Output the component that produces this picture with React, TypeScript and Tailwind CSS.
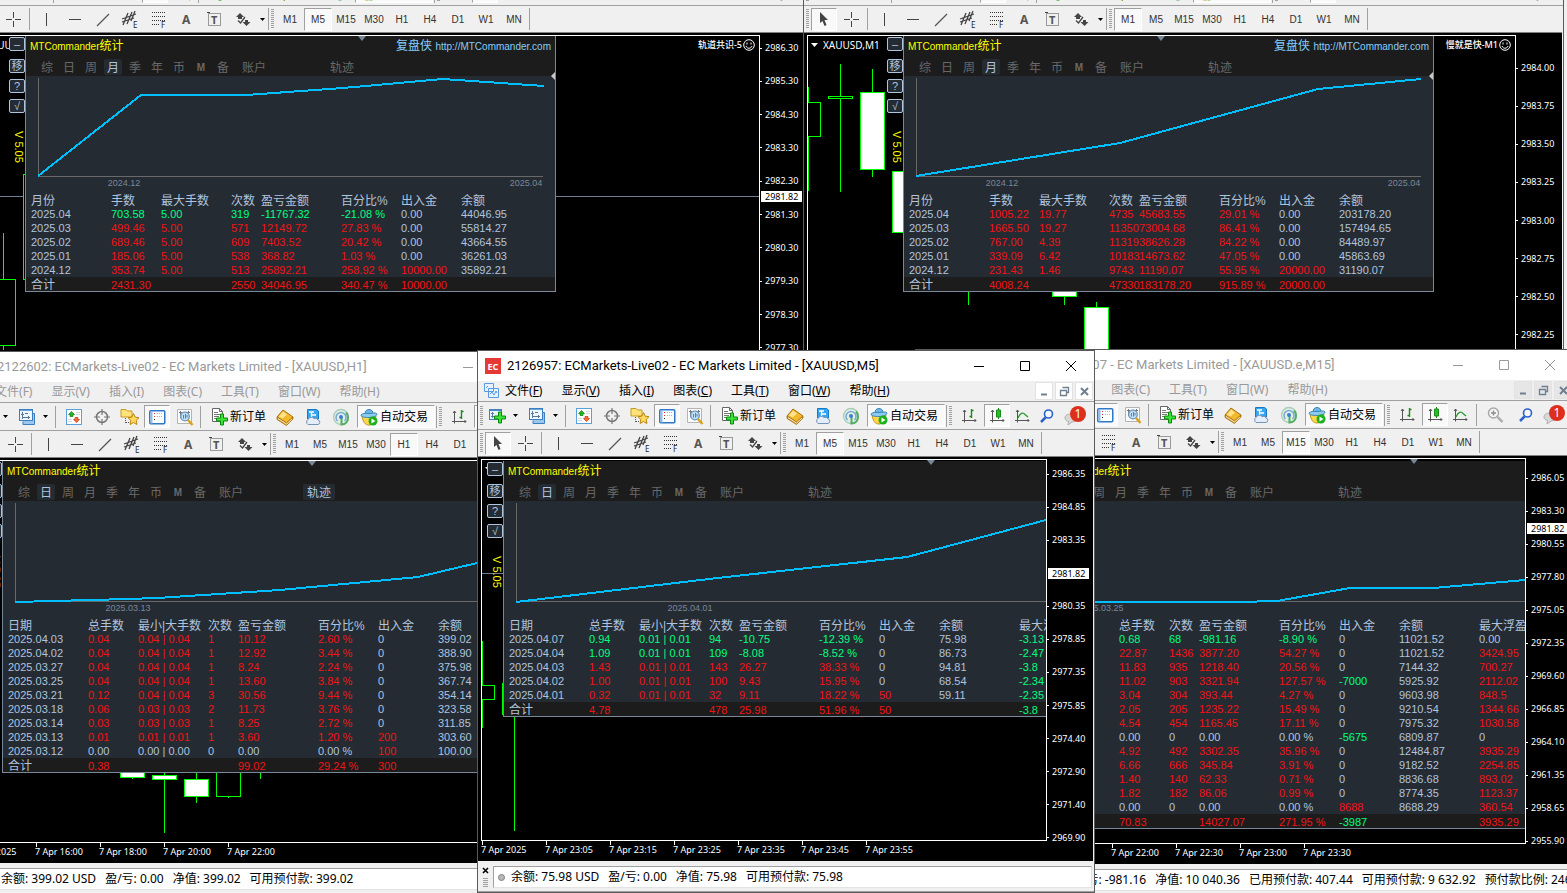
import React from 'react';
import clsx from 'clsx';

type Candle = {
  x: number;
  high: number;
  low: number;
  top?: number;
  bottom?: number;
  filled?: boolean;
};

type Stats = {
  className: string;
  tab: string;
  trackOn?: boolean;
  site?: boolean;
  line: string;
  axisEnd: number;
  dates: { x: number; text: string }[];
  cols: string[];
  head: string[];
  rows: string[][];
  total: string[];
};

type TerminalProps = {
  className: string;
  title: string;
  symbol: string;
  active?: boolean;
  frame: string;
  cursor?: boolean;
  zoomTool?: boolean;
  expert?: string;
  candles: Candle[];
  priceLine?: number;
  marker: string;
  prices: string[];
  priceClass?: string;
  current?: string;
  times: string[];
  status: string[];
  stats: Stats;
};

const frames = ['M1', 'M5', 'M15', 'M30', 'H1', 'H4', 'D1', 'W1', 'MN'];

const menus = [
  ['文件', 'F'],
  ['显示', 'V'],
  ['插入', 'I'],
  ['图表', 'C'],
  ['工具', 'T'],
  ['窗口', 'W'],
  ['帮助', 'H'],
];

const tabs = ['综', '日', '周', '月', '季', '年', '币', 'M', '备'];

const monthCols = [
  'w-[85px]',
  'w-[50px]',
  'w-[70px]',
  'w-[30px]',
  'w-[80px]',
  'w-[60px]',
  'w-[60px]',
  'w-auto',
];
const dayCols = [
  'w-[85px]',
  'w-[50px]',
  'w-[70px]',
  'w-[30px]',
  'w-[80px]',
  'w-[60px]',
  'w-[60px]',
  'w-[80px]',
  'w-auto',
];
const shortCols = [
  'w-[85px]',
  'w-[50px]',
  'w-[30px]',
  'w-[80px]',
  'w-[60px]',
  'w-[60px]',
  'w-[80px]',
  'w-auto',
];

const monthHead = ['月份', '手数', '最大手数', '次数', '盈亏金额', '百分比%', '出入金', '余额'];
const dayHead = ['日期', '总手数', '最小|大手数', '次数', '盈亏金额', '百分比%', '出入金', '余额', '最大浮盈'];

function tone(value: string) {
  const n = parseFloat(value);
  if (!n) return 'text-[#b0c4de]';
  return n < 0 ? 'text-[#00ff7f]' : 'text-[#f01414]';
}

/* ---------- icons ---------- */

function Svg({ w = 18, h = 18, children }: { w?: number; h?: number; children: React.ReactNode }) {
  return (
    <svg width={w} height={h} viewBox={`0 0 ${w} ${h}`} fill="none" className="shrink-0">
      {children}
    </svg>
  );
}

function Plus({ x, y }: { x: number; y: number }) {
  return (
    <path
      d={`M${x + 4} ${y}h3v4h4v3h-4v4h-3v-4h-4v-3h4z`}
      fill="#3be03b"
      stroke="#0a8a0a"
    />
  );
}

const NewChartIcon = () => (
  <Svg>
    <rect x="1.500" y="2.500" width="12" height="10" fill="#eaf4ff" stroke="#4a7fb5" />
    <path d="M2 3.500h11" stroke="#3f8fd0" />
    <path d="M4.500 5v6M3 6.500h3M3 9.500h8" stroke="#5b7fa5" />
    <Plus x={6.5} y={5} />
  </Svg>
);

const ProfilesIcon = () => (
  <Svg>
    <path d="M5 13.500v3h11.500v-11h-2" fill="#9cc6ec" stroke="#3a7fc0" />
    <rect x="1.500" y="1.500" width="13" height="11" fill="#eef6ff" stroke="#3a7fc0" />
    <path d="M2 2.500h12" stroke="#6aa6dc" />
    <path d="M4.500 4v7M3 6.500h3M4 9.500h8M10.500 8v3M7 5.500h3" stroke="#5c7894" />
  </Svg>
);

const MarketIcon = () => (
  <Svg>
    <rect x="1.500" y="1.500" width="15" height="15" fill="#fff" stroke="#5aa0dc" />
    <path d="M6.500 3.500l3 3H8v2H5v-2H3.500z" fill="#22b422" stroke="#128012" strokeWidth=".7" />
    <path d="M11.500 14.500l-3-3H10v-2h3v2h1.500z" fill="#ff6a3c" stroke="#c23a10" strokeWidth=".7" />
    <path d="M11 4.500h4M11 6.500h4M3 11.500h4M3 13.500h4" stroke="#d5dbe1" />
  </Svg>
);

const TargetIcon = () => (
  <Svg>
    <circle cx="9" cy="9" r="5.500" stroke="#777" strokeWidth="1.500" />
    <path d="M9 1v6M9 11v6M1 9h6M11 9h6" stroke="#777" strokeWidth="1.200" />
  </Svg>
);

const FolderIcon = () => (
  <Svg w={20}>
    <path d="M1 1.500h5l1.500 1.500H12v6H1z" fill="#ffe27a" stroke="#c79a1c" />
    <path d="M5.500 10v6M6 14.500h4" stroke="#555" strokeDasharray="1 1" />
    <path
      d="M13.500 5.500l1.700 3.700 3.800.5-2.800 2.700.7 4.100-3.400-2-3.400 2 .7-4.100L8 9.700l3.800-.5z"
      fill="#ffd95c"
      stroke="#b98612"
    />
  </Svg>
);

const TerminalIcon = () => (
  <Svg>
    <rect x="1.750" y="2.750" width="15" height="13" rx="1" fill="#fff" stroke="#2d78c8" strokeWidth="1.500" />
    <path d="M2.500 3.500h2v12h-2z" fill="#8fbdea" />
    <path d="M6 5.500h1M6 8.500h1" stroke="#e03030" />
    <path d="M6 11.500h1" stroke="#222" />
    <path d="M9 5.500h6M9 8.500h6" stroke="#9fb8d0" strokeDasharray="1 1" />
  </Svg>
);

const TesterIcon = () => (
  <Svg>
    <path d="M1.500 1.500h14v14h-14z" fill="#fbfbfb" stroke="#b4b4b4" />
    <path d="M4.500 3v7M3 4.500h3M12.500 3v3M11 4.500h3" stroke="#777" />
    <circle cx="9" cy="8.500" r="4.300" fill="#bfe0f8" stroke="#6b96bd" strokeWidth="1.300" />
    <path d="M7.500 10.500V7M9.500 10.500V6M11 9.500V7" stroke="#5a82a8" />
    <path d="M12 12l4.500 5" stroke="#d9a21b" strokeWidth="2.500" />
  </Svg>
);

const OrderIcon = () => (
  <Svg w={18} h={19}>
    <path d="M2.500 1.500h7l3 3v10h-10z" fill="#fff" stroke="#666" />
    <path d="M9.500 1.500v3h3" stroke="#666" />
    <path d="M4 5.500h4M4 7.500h6M4 9.500h5M4 11.500h3" stroke="#777" />
    <Plus x={6.5} y={7} />
  </Svg>
);

const BookIcon = () => (
  <Svg>
    <path d="M7 2l10 7-6.500 6L1 9z" fill="#f2b92c" stroke="#a56f0e" />
    <path d="M1 9v2.500l9.500 6L17 11V9l-6.500 6z" fill="#d99a1c" stroke="#a56f0e" strokeWidth=".8" />
    <path d="M2 10.500l8.500 5.500 5.500-5" stroke="#fff" strokeWidth=".8" />
    <path d="M7 3.500l4 3-4.500 4-3.500-2z" fill="#ffe28a" />
  </Svg>
);

const CloudIcon = () => (
  <Svg>
    <path d="M3.500 1.500h9l2 1.500v8h-11z" fill="#35a7ef" stroke="#1878c4" />
    <path d="M5 4h5M8 7h4M7.500 4v5" stroke="#fff" strokeWidth="1.300" />
    <path
      d="M4 16.500a3 3 0 010-5 3.500 3.500 0 016-1 3 3 0 014 1.500 2.300 2.300 0 010 4.500z"
      fill="#e4eefa"
      stroke="#7592b8"
    />
  </Svg>
);

const SignalIcon = () => (
  <Svg>
    <circle cx="9" cy="9" r="7.500" fill="#e2efe6" stroke="#a9cdb6" strokeWidth="1.300" />
    <path d="M5.500 13a5 5 0 117 0" stroke="#7aa9d8" strokeWidth="1.500" />
    <path d="M9.500 9v7.500c4 0 6.500-3 6.500-7 0-2-1-4-2-5" stroke="#55ad62" strokeWidth="2" />
    <circle cx="9" cy="9" r="2" fill="#3a7fd0" />
  </Svg>
);

const AutoIcon = () => (
  <Svg>
    <path d="M2 8c1 6 3 9 7 9s6-3 7-9z" fill="#ffd54a" stroke="#c0921a" />
    <path d="M5 6c0-3 1.500-4.500 4-4.500S13 3 13 6z" fill="#6fb7e4" stroke="#3a86b8" />
    <path d="M1 7c2-2 4-1.500 8-1.500S15.500 4 17 6c0 2-4 3.500-8 3.500S1 9 1 7z" fill="#8ecbf0" stroke="#3a86b8" />
    <circle cx="13" cy="13" r="4.500" fill="#19b219" />
    <path d="M11.500 10.500v5l4-2.500z" fill="#fff" />
  </Svg>
);

const ChartAxes = () => (
  <path d="M3.500 3v12.500M1 13.500h14M2 5l1.500-2L5 5M13.500 12l1.500 1.500-1.500 1.500" stroke="#555" />
);

const BarsIcon = () => (
  <Svg w={17}>
    <ChartAxes />
    <path d="M10.500 2v9M8.500 9.500h2M10.500 3.500h2" stroke="#1d8a1d" strokeWidth="1.400" />
  </Svg>
);

const CandlesIcon = () => (
  <Svg w={17}>
    <ChartAxes />
    <path d="M9.500 1v11" stroke="#1d8a1d" />
    <path d="M7.500 3h4v7h-4z" fill="#22c022" stroke="#1d8a1d" />
  </Svg>
);

const LineIcon = () => (
  <Svg w={17}>
    <ChartAxes />
    <path d="M4 11c2-5 5-6 7-3.500l3 2.500" stroke="#2d9a2d" strokeWidth="1.300" />
  </Svg>
);

const ZoomInIcon = () => (
  <Svg>
    <circle cx="7.500" cy="7" r="5" stroke="#a8a8a8" strokeWidth="1.500" fill="#f6f6f6" />
    <path d="M5 7h5M7.500 4.500v5" stroke="#8c8c8c" strokeWidth="1.400" />
    <path d="M11.500 11l5 5" stroke="#b0b0b0" strokeWidth="2.500" />
  </Svg>
);

const SearchIcon = () => (
  <Svg w={16} h={16}>
    <circle cx="9.500" cy="6" r="4" stroke="#2a62c8" strokeWidth="1.600" fill="#f4f8ff" />
    <path d="M6.500 9.500L2 14" stroke="#2a62c8" strokeWidth="2.500" />
  </Svg>
);

const ChatIcon = () => (
  <Svg w={24} h={20}>
    <path d="M2 12c0-3 3-4 6-4s6 1.500 6 4-3 4-5 4l-4 3 .5-3.500C3.500 15 2 14 2 12z" fill="#d8d8d8" stroke="#b0b0b0" />
    <circle cx="15" cy="8" r="8" fill="#dc2f1c" />
    <text x="15" y="12" textAnchor="middle" fontSize="12" fill="#fff">
      1
    </text>
  </Svg>
);

const drawTools = [
  <path key="v" d="M9.500 3v13" stroke="#444" />,
  <path key="h" d="M4 9.500h12" stroke="#444" />,
  <path key="t" d="M4 16L16 4" stroke="#555" strokeWidth="1.200" />,
  <g key="e">
    <path
      d="M1 9l14-5M1 12l12-4M2 15l5-12M6 14l5-12M10 11l4-10"
      stroke="#444"
      strokeWidth="1.300"
    />
    <text x="12" y="18" fontSize="8" fill="#222">
      E
    </text>
  </g>,
  <g key="f">
    <path d="M3 2.500h13M3 6.500h13M3 10.500h13M3 14.500h8" stroke="#333" strokeDasharray="1 1" />
    <text x="12" y="18" fontSize="8" fill="#222">
      F
    </text>
  </g>,
  <text key="a" x="5" y="14" fontSize="12" fontWeight="bold" fill="#555">
    A
  </text>,
  <g key="tx">
    <rect x="3.500" y="3.500" width="12" height="12" stroke="#444" strokeDasharray="1 1" />
    <path d="M2 2.500h3" stroke="#444" />
    <text x="6" y="14" fontSize="11" fontWeight="bold" fill="#555">
      T
    </text>
  </g>,
  <g key="ar">
    <path d="M7 3l4 4H9v2H5V7H3z" fill="#444" />
    <path d="M13.500 16l-4-4H12v-2h3v2h2.500z" fill="#444" />
    <path d="M5 10.500l2.500 2.500L12 7" stroke="#444" strokeWidth="1.300" />
  </g>,
];

/* ---------- toolbar parts ---------- */

const Caret = () => (
  <button aria-label="更多" className="flex w-3 shrink-0 items-center justify-center">
    <Svg w={5} h={3}>
      <path d="M0 0h5L2.500 3z" fill="#000" />
    </Svg>
  </button>
);

const Grip = () => (
  <span className="mx-[2px] h-5 w-[3px] shrink-0 bg-[repeating-linear-gradient(#a0a0a0_0_1px,transparent_1px_2px)]" />
);

const Sep = ({ className }: { className?: string }) => (
  <span className={clsx('h-[22px] w-px shrink-0 bg-[#a0a0a0]', className)} />
);

function Tool({
  label,
  pressed,
  className = 'w-7',
  children,
}: {
  label: string;
  pressed?: boolean;
  className?: string;
  children: React.ReactNode;
}) {
  return (
    <button
      aria-label={label}
      className={clsx(
        'flex h-[23px] shrink-0 items-center justify-center border',
        pressed
          ? 'border-t-[#a0a0a0] border-l-[#a0a0a0] border-r-white border-b-white bg-[#f9f9f9]'
          : 'border-transparent',
        className,
      )}
    >
      {children}
    </button>
  );
}

function StandardBar({ zoomTool }: { zoomTool?: boolean }) {
  return (
    <div className="flex h-7 items-center border-t border-[#a0a0a0] pr-[3px]">
      <Grip />
      <Tool label="新图表" className="w-6"><NewChartIcon /></Tool>
      <Caret />
      <Tool label="配置" className="ml-1 w-6"><ProfilesIcon /></Tool>
      <Caret />
      <Sep className="mx-1" />
      <Tool label="市场报价"><MarketIcon /></Tool>
      <Tool label="数据窗口"><TargetIcon /></Tool>
      <Tool label="导航"><FolderIcon /></Tool>
      <Tool label="终端" pressed className="w-[26px]"><TerminalIcon /></Tool>
      <Tool label="测试" className="w-[30px]"><TesterIcon /></Tool>
      <Sep className="mr-1" />
      <button className="flex h-[23px] w-[66px] shrink-0 items-center justify-center gap-[2px] text-xs whitespace-nowrap text-black">
        <OrderIcon />
        新订单
      </button>
      <Tool label="编辑器"><BookIcon /></Tool>
      <Tool label="云"><CloudIcon /></Tool>
      <Tool label="信号"><SignalIcon /></Tool>
      <button className="ml-[2px] flex h-[23px] w-[78px] shrink-0 items-center gap-[2px] border border-t-[#a0a0a0] border-l-[#a0a0a0] border-r-white border-b-white bg-[#f9f9f9] pl-[2px] text-xs whitespace-nowrap text-black">
        <AutoIcon />
        自动交易
      </button>
      <Sep className="ml-px" />
      <Grip />
      <Tool label="柱状图" className="w-[30px]"><BarsIcon /></Tool>
      <Tool label="蜡烛图" pressed className="w-[26px]"><CandlesIcon /></Tool>
      <Tool label="折线图" className="w-[24px]"><LineIcon /></Tool>
      {zoomTool && (
        <>
          <Sep className="mx-1" />
          <Tool label="放大"><ZoomInIcon /></Tool>
        </>
      )}
      <Tool label="搜索" className="ml-auto w-6"><SearchIcon /></Tool>
      <Tool label="消息" className="w-8"><ChatIcon /></Tool>
    </div>
  );
}

function LineBar({ frame, cursor }: { frame: string; cursor?: boolean }) {
  return (
    <div className="flex h-[27px] items-center border-t border-[#a0a0a0]">
      <Grip />
      <Tool label="光标" pressed={cursor} className="w-[26px]">
        <Svg>
          <path d="M5 2l8 8H9.500l2 5-2 1-2-5L5 13z" fill="#444" />
        </Svg>
      </Tool>
      <Tool label="十字准线">
        <Svg>
          <path d="M9.500 2v6M9.500 11v6M2 9.500h6M11 9.500h6" stroke="#444" />
        </Svg>
      </Tool>
      <Sep className="mx-[2px]" />
      {drawTools.map((tool, i) => (
        <Tool key={i} label={`绘图 ${i + 1}`}>
          <Svg w={19} h={19}>{tool}</Svg>
        </Tool>
      ))}
      <Caret />
      <Sep />
      <Grip />
      {frames.map((f) => (
        <button
          key={f}
          className={clsx(
            'flex h-[23px] w-7 shrink-0 items-center justify-center border text-[10px] text-[#333] font-[Liberation_Sans,sans-serif]',
            f === frame
              ? 'border-t-[#a0a0a0] border-l-[#a0a0a0] border-r-white border-b-white bg-[#f9f9f9]'
              : 'border-transparent',
          )}
        >
          {f}
        </button>
      ))}
      <Sep className="ml-px" />
    </div>
  );
}

/* ---------- MTCommander panel ---------- */

const sideButton =
  'flex h-[14px] w-4 items-center justify-center rounded-[2px] border border-[#b0c4de] bg-[#252b33] text-[11px] leading-none text-[#b0c4de]';

function StatsPanel({ stats }: { stats: Stats }) {
  const profitCol = stats.head.indexOf('盈亏金额');
  const flowCol = stats.head.indexOf('出入金');

  const cellTone = (row: string[], col: number) => {
    if (col === 0 || col === flowCol + 1) return 'text-[#b0c4de]';
    if (col < flowCol) return tone(row[profitCol]);
    return tone(row[col]);
  };

  return (
    <div
      className={clsx(
        'absolute border-x border-b border-[#778899] bg-[#252b33] font-[Liberation_Sans,Noto_Sans_CJK_SC,sans-serif]',
        stats.className,
      )}
    >
      <div className="absolute top-px right-full mr-px flex flex-col">
        <button className={clsx(sideButton, 'mb-2')}>–</button>
        <button className={clsx(sideButton, 'mb-1.5')}>移</button>
        <button className={clsx(sideButton, 'mb-1.5')}>?</button>
        <button className={clsx(sideButton, 'mb-[18px]')}>√</button>
        <span className="ml-auto w-3 text-[11px] leading-3 whitespace-nowrap text-[#ffff00] [writing-mode:vertical-rl]">
          V 5.05
        </span>
      </div>

      <div className="overflow-hidden">
        <div className="h-10 bg-[#1c1c1c]">
          <div className="flex h-[22px] items-start justify-between pr-1 pl-1 text-xs leading-5 whitespace-nowrap">
            <span className="text-[#ffff00]">
              <span className="text-[10px]">MTCommander</span>
              统计
            </span>
            {stats.site && (
              <a href="http://MTCommander.com" className="text-[#87cefa]">
                复盘侠 <span className="text-[10px]">http://MTCommander.com</span>
              </a>
            )}
          </div>
          <div className="flex h-[18px] items-center pl-2.5 text-xs text-[#696969]">
            {tabs.map((t) => (
              <button
                key={t}
                className={clsx(
                  'mx-[2px] h-4 w-[18px] shrink-0 rounded-[2px] pt-[2px] leading-[14px]',
                  t === stats.tab && 'bg-[#252b33] text-[#b0c4de]',
                  t === 'M' && 'text-[10px] font-bold',
                )}
              >
                {t}
              </button>
            ))}
            <button className="ml-1.5 h-4 w-7 shrink-0 pt-[2px] leading-[14px]">账户</button>
            <button
              className={clsx(
                'ml-[58px] h-4 w-8 shrink-0 rounded-[2px] pt-[2px] leading-[14px]',
                stats.trackOn && 'bg-[#252b33] text-[#b0c4de]',
              )}
            >
              轨迹
            </button>
          </div>
        </div>

        <svg width="100%" height="117" className="block" fill="none">
          <path d={`M12.500 2v98.500H${stats.axisEnd}`} stroke="#696969" />
          <polyline points={stats.line} stroke="#00bfff" strokeWidth="2" shapeRendering="crispEdges" />
          {stats.dates.map((d) => (
            <text key={d.text} x={d.x} y="110" textAnchor="middle" fontSize="9" fill="#778899">
              {d.text}
            </text>
          ))}
        </svg>

        <table className="w-full table-fixed border-collapse text-left text-[11px] leading-[14px] whitespace-nowrap">
          <colgroup>
            {stats.cols.map((c, i) => (
              <col key={i} className={c} />
            ))}
          </colgroup>
          <thead>
            <tr className="text-xs leading-[12px] text-[#b0c4de]">
              {stats.head.map((h, i) => (
                <th key={h} className={clsx('p-0 pt-[2px] font-normal', i === 0 && 'pl-[5px]')}>
                  {h}
                </th>
              ))}
            </tr>
          </thead>
          <tbody>
            {stats.rows.map((row, r) => (
              <tr key={r}>
                {row.map((cell, i) => (
                  <td key={i} className={clsx('p-0', i === 0 && 'pl-[5px]', cellTone(row, i))}>
                    {cell}
                  </td>
                ))}
              </tr>
            ))}
          </tbody>
          <tfoot>
            <tr className="bg-[#1c1c1c] leading-[12px]">
              {stats.total.map((cell, i) => (
                <td
                  key={i}
                  className={clsx(
                    'p-0 pt-[2px]',
                    i === 0 && 'pl-[5px] text-xs leading-[12px]',
                    cellTone(stats.total, i),
                  )}
                >
                  {cell}
                </td>
              ))}
            </tr>
          </tfoot>
        </table>
      </div>
      {stats.site && (
        <svg width="4" height="8" className="absolute top-9 right-0">
          <path d="M4 0v8L0 4z" fill="#c8c8c8" />
        </svg>
      )}
    </div>
  );
}

/* ---------- terminal window ---------- */

function Candles({ candles, priceLine }: { candles: Candle[]; priceLine?: number }) {
  return (
    <svg width="100%" height="100%" className="absolute inset-0" shapeRendering="crispEdges">
      {priceLine && <path d={`M0 ${priceLine}.5h2000`} stroke="#708090" />}
      {candles.map((c, i) => (
        <g key={i} stroke="#00ff00">
          <path d={`M${c.x + 0.5} ${c.high}V${c.low}`} />
          {c.top !== undefined && c.bottom !== undefined && (
            <rect
              x={c.x - 11.5}
              y={c.top + 0.5}
              width="24"
              height={c.bottom - c.top}
              fill={c.filled ? '#fff' : '#000'}
            />
          )}
        </g>
      ))}
    </svg>
  );
}

const axisFont = 'font-[Noto_Sans,sans-serif] text-[9px] leading-[10px] text-white';

function Terminal(props: TerminalProps) {
  const { active, stats } = props;
  const ink = active ? 'text-black' : 'text-[#999]';

  return (
    <section
      className={clsx(
        'absolute flex flex-col border border-[#5a5a5a] bg-[#f0f0f0] font-[Noto_Sans,Noto_Sans_CJK_SC,sans-serif]',
        props.className,
      )}
    >
      <header className={clsx('flex h-[30px] shrink-0 items-center bg-white pl-[7px]', ink)}>
        <span className="mr-1.5 flex h-4 w-4 shrink-0 items-center justify-center bg-[#e53935] text-[9px] leading-none font-bold text-white">
          EC
        </span>
        <h2 className="flex-1 truncate font-[Roboto,sans-serif] text-[13px]">{props.title}</h2>
        {['M1 8.500h10', 'M1.500 3.500h9v9h-9z', 'M1 3l10 10M11 3L1 13'].map((d, i) => (
          <button
            key={d}
            aria-label={['最小化', '最大化', '关闭'][i]}
            className="flex w-[46px] shrink-0 justify-center"
          >
            <Svg w={12} h={16}>
              <path d={d} stroke="currentColor" />
            </Svg>
          </button>
        ))}
      </header>

      <nav className={clsx('flex h-5 shrink-0 items-center pl-1.5 text-xs whitespace-nowrap', ink)}>
        <Svg w={16} h={16}>
          <path d="M.5.5h9v8h-9zM4.500 5.500h10v9h-10z" fill="#e8f2ff" stroke="#5a9ae0" />
          <path d="M6 11l2-2 2 3 2-4 1 2M2 5l2-2" stroke="#5a9ae0" />
        </Svg>
        <div className="ml-[5px] flex gap-[19px]">
          {menus.map(([name, key]) => (
            <button key={key}>
              {name}({active ? <u>{key}</u> : key})
            </button>
          ))}
        </div>
        <div className="ml-auto flex gap-[2px] pr-px">
          {['M5 11.500h6', 'M6.500 4.500h6v5h-2M4.500 7.500h6v5h-6z', 'M5 5l7 7M12 5l-7 7'].map((d, i) => (
            <button
              key={d}
              aria-label={['最小化图表', '还原图表', '关闭图表'][i]}
              className={clsx(
                'flex h-[18px] w-[18px] items-center justify-center border',
                active ? 'border-[#e2e2e2] bg-white' : 'border-[#e2e2e2] bg-[#e6e6e6]',
              )}
            >
              <Svg w={16} h={16}>
                <path d={d} stroke="#6e7f90" strokeWidth={i === 1 ? 1.3 : 2} />
              </Svg>
            </button>
          ))}
        </div>
      </nav>

      <div className="shrink-0 overflow-hidden">
        <StandardBar zoomTool={props.zoomTool} />
        <LineBar frame={props.frame} cursor={props.cursor} />
      </div>

      <div className="mr-px flex min-h-0 flex-1 flex-col border-t border-[#808080] bg-black pt-[2px] pl-[3px]">
        <div className="flex min-h-0 flex-1">
          <div className="relative min-w-0 flex-1 overflow-hidden border border-white">
            <Candles candles={props.candles} priceLine={props.priceLine} />
            <span className="absolute top-1 left-[3px] flex items-center gap-[5px] text-[10px] leading-[10px] text-white">
              <Svg w={7} h={4}>
                <path d="M0 0h7L3.500 4z" fill="#fff" />
              </Svg>
              {props.symbol}
            </span>
            {props.expert && (
              <span className="absolute top-[3px] right-1 flex items-center gap-px text-[9px] leading-3 font-medium text-white">
                {props.expert}
                <Svg w={12} h={12}>
                  <circle cx="6" cy="6" r="5.300" stroke="#fff" />
                  <path d="M4 3.500v2M8 3.500v2M3 7c1 3 5 3 6 0" stroke="#fff" />
                </Svg>
              </span>
            )}
            <StatsPanel stats={stats} />
            <svg width="8" height="5" className={clsx('absolute top-0', props.marker)}>
              <path d="M0 0h8L4 5z" fill="#778899" />
            </svg>
          </div>
          <div className={clsx('relative w-[46px] shrink-0', axisFont)}>
            <div className={clsx('flex flex-col justify-between', props.priceClass)}>
              {props.prices.map((p, i) => (
                <div key={i} className="flex h-2.5 items-center">
                  {p && <span className="mr-[3px] h-px w-[2px] bg-white" />}
                  {p}
                </div>
              ))}
            </div>
            {props.current && (
              <span className={clsx('absolute left-px w-[41px] bg-white pl-1 leading-[11px] text-black', props.current)}>
                2981.82
              </span>
            )}
          </div>
        </div>
        <div className={clsx('flex h-5 shrink-0 overflow-hidden', axisFont)}>
          {props.times.map((t) => (
            <div key={t} className="w-16 shrink-0 whitespace-nowrap">
              <span className="ml-px block h-1 w-px bg-white" />
              {t}
            </div>
          ))}
        </div>
      </div>

      <footer className="flex h-[31px] shrink-0 items-center gap-2 border-b border-[#a0a0a0] pt-[2px] pl-1 text-xs text-black">
        <span className="flex w-[7px] flex-col items-center gap-1">
          <Svg w={7} h={7}>
            <path d="M1 1l5 5M6 1L1 6" stroke="#000" strokeWidth="1.600" />
          </Svg>
          <span className="h-[9px] w-[5px] bg-[repeating-linear-gradient(#a0a0a0_0_1px,transparent_1px_2px)]" />
        </span>
        <p className="mr-[2px] -ml-1 flex h-[22px] flex-1 items-center overflow-hidden border border-t-[#a0a0a0] border-r-[#e3e3e3] border-b-[#e3e3e3] border-l-[#a0a0a0] bg-white pl-1 whitespace-nowrap">
          <span className="mr-1.5 h-[7px] w-[7px] shrink-0 rounded-full border border-[#808080] bg-[#b8b8b8]" />
          {props.status.map((s) => (
            <span key={s} className="mr-[9px]">
              {s}
            </span>
          ))}
        </p>
      </footer>
    </section>
  );
}

/* ---------- desktop ---------- */

const terminals: TerminalProps[] = [
  {
    className: 'top-[-74px] left-[-35px] w-[843px] h-[500px]',
    title: 'ECMarkets-Live02 - EC Markets Limited - [XAUUSD,M5]',
    symbol: 'XAUUSD,M5',
    frame: 'M5',
    expert: '轨道共识-5',
    candles: [
      { x: 33, high: 197, low: 314, top: 243, bottom: 309 },
      { x: 65, high: 138, low: 243, top: 138, bottom: 243 },
    ],
    priceLine: 160,
    marker: 'left-[388px]',
    prices: [
      '2986.30',
      '2985.30',
      '2984.30',
      '2983.30',
      '2982.30',
      '2981.30',
      '2980.30',
      '2979.30',
      '2978.30',
      '2977.30',
    ],
    priceClass: 'mt-[8px] h-[310px]',
    current: 'top-[156px]',
    times: [],
    status: [],
    stats: {
      className: 'top-0 left-[55px] w-[531px]',
      tab: '月',
      site: true,
      line: '12,100 115,19 220,19 317,12 417,3 518,10',
      axisEnd: 517,
      dates: [
        { x: 98, text: '2024.12' },
        { x: 500, text: '2025.04' },
      ],
      cols: monthCols,
      head: monthHead,
      rows: [
        ['2025.04', '703.58', '5.00', '319', '-11767.32', '-21.08 %', '0.00', '44046.95'],
        ['2025.03', '499.46', '5.00', '571', '12149.72', '27.83 %', '0.00', '55814.27'],
        ['2025.02', '689.46', '5.00', '609', '7403.52', '20.42 %', '0.00', '43664.55'],
        ['2025.01', '185.06', '5.00', '538', '368.82', '1.03 %', '0.00', '36261.03'],
        ['2024.12', '353.74', '5.00', '513', '25892.21', '258.92 %', '10000.00', '35892.21'],
      ],
      total: ['合计', '2431.30', '', '2550', '34046.95', '340.47 %', '10000.00', ''],
    },
  },
  {
    className: 'top-[-74px] left-[803px] right-[3px] h-[500px]',
    title: 'ECMarkets-Live02 - EC Markets Limited - [XAUUSD,M1]',
    symbol: 'XAUUSD,M1',
    frame: 'M1',
    cursor: true,
    expert: '慢就是快-M1',
    candles: [
      { x: 0, high: 51, low: 155, top: 66, bottom: 100 },
      { x: 32, high: 28, low: 156, top: 60, bottom: 62 },
      { x: 64, high: 33, low: 141, top: 56, bottom: 133, filled: true },
      { x: 96, high: 135, low: 196, top: 135, bottom: 196, filled: true },
      { x: 160, high: 240, low: 269 },
      { x: 256, high: 240, low: 269, top: 250, bottom: 260, filled: true },
      { x: 288, high: 266, low: 330, top: 271, bottom: 330, filled: true },
    ],
    marker: 'left-[349px]',
    prices: ['2984.00', '2983.75', '2983.50', '2983.25', '2983.00', '2982.75', '2982.50', '2982.25'],
    priceClass: 'mt-[28px] h-[277px]',
    times: [],
    status: [],
    stats: {
      className: 'top-0 left-[95px] w-[531px]',
      tab: '月',
      site: true,
      line: '12,100 216,67 414,13 517,3',
      axisEnd: 517,
      dates: [
        { x: 98, text: '2024.12' },
        { x: 500, text: '2025.04' },
      ],
      cols: monthCols,
      head: monthHead,
      rows: [
        ['2025.04', '1005.22', '19.77', '4735', '45683.55', '29.01 %', '0.00', '203178.20'],
        ['2025.03', '1665.50', '19.27', '11350', '73004.68', '86.41 %', '0.00', '157494.65'],
        ['2025.02', '767.00', '4.39', '11319', '38626.28', '84.22 %', '0.00', '84489.97'],
        ['2025.01', '339.09', '6.42', '10183', '14673.62', '47.05 %', '0.00', '45863.69'],
        ['2024.12', '231.43', '1.46', '9743', '11190.07', '55.95 %', '20000.00', '31190.07'],
      ],
      total: ['合计', '4008.24', '', '47330', '183178.20', '915.89 %', '20000.00', ''],
    },
  },
  {
    className: 'top-[351px] left-[-33px] w-[617px] bottom-[-2px]',
    title: '2122602: ECMarkets-Live02 - EC Markets Limited - [XAUUSD,H1]',
    symbol: 'XAUUSD,H1',
    frame: 'H1',
    candles: [
      { x: 160, high: 300, low: 318, top: 300, bottom: 316, filled: true },
      { x: 192, high: 300, low: 372, top: 314, bottom: 318, filled: true },
      { x: 224, high: 300, low: 342, top: 318, bottom: 335, filled: true },
      { x: 256, high: 300, low: 337, top: 300, bottom: 335 },
      { x: 288, high: 300, low: 318 },
    ],
    marker: 'left-[336px]',
    prices: [],
    times: ['7 Apr 2025', '7 Apr 16:00', '7 Apr 18:00', '7 Apr 20:00', '7 Apr 22:00'],
    status: ['余额: 399.02 USD', '盈/亏: 0.00', '净值: 399.02', '可用预付款: 399.02'],
    stats: {
      className: 'top-0 left-[30px] right-[-2px]',
      tab: '日',
      trackOn: true,
      line: '12,101 125,98 154,97 277,89 415,76 474,62 560,40',
      axisEnd: 900,
      dates: [{ x: 125, text: '2025.03.13' }],
      cols: dayCols,
      head: dayHead.slice(0, 8),
      rows: [
        ['2025.04.03', '0.04', '0.04 | 0.04', '1', '10.12', '2.60 %', '0', '399.02'],
        ['2025.04.02', '0.04', '0.04 | 0.04', '1', '12.92', '3.44 %', '0', '388.90'],
        ['2025.03.27', '0.04', '0.04 | 0.04', '1', '8.24', '2.24 %', '0', '375.98'],
        ['2025.03.25', '0.04', '0.04 | 0.04', '1', '13.60', '3.84 %', '0', '367.74'],
        ['2025.03.21', '0.12', '0.04 | 0.04', '3', '30.56', '9.44 %', '0', '354.14'],
        ['2025.03.18', '0.06', '0.03 | 0.03', '2', '11.73', '3.76 %', '0', '323.58'],
        ['2025.03.14', '0.03', '0.03 | 0.03', '1', '8.25', '2.72 %', '0', '311.85'],
        ['2025.03.13', '0.01', '0.01 | 0.01', '1', '3.60', '1.20 %', '200', '303.60'],
        ['2025.03.12', '0.00', '0.00 | 0.00', '0', '0.00', '0.00 %', '100', '100.00'],
      ],
      total: ['合计', '0.38', '', '', '99.02', '29.24 %', '300', ''],
    },
  },
  {
    className: 'top-[349px] left-[915px] right-[-7px] bottom-[-3px]',
    title: '2126607: ECMarkets-Live07 - EC Markets Limited - [XAUUSD.e,M15]',
    symbol: 'XAUUSD.e,M15',
    frame: 'M15',
    zoomTool: true,
    candles: [],
    priceLine: 69,
    marker: 'left-[490px]',
    prices: [
      '2986.05',
      '2983.30',
      '2980.55',
      '2977.80',
      '2975.05',
      '2972.35',
      '2969.60',
      '2966.85',
      '2964.10',
      '2961.35',
      '2958.65',
      '2955.90',
    ],
    priceClass: 'mt-[15px] h-[373px]',
    current: 'top-[65px]',
    times: ['7 Apr 2025', '7 Apr 21:00', '7 Apr 21:30', '7 Apr 22:00', '7 Apr 22:30', '7 Apr 23:00', '7 Apr 23:30'],
    status: [
      '余额: 11 021.52 USD',
      '盈/亏: -981.16',
      '净值: 10 040.36',
      '已用预付款: 407.44',
      '可用预付款: 9 632.92',
      '预付款比例: 2464.25%',
    ],
    stats: {
      className: 'top-[2px] left-[113px] right-[-2px]',
      tab: '日',
      line: '12,101 203,101 243,100 316,87 399,87 491,79',
      axisEnd: 900,
      dates: [{ x: 67, text: '2025.03.25' }],
      cols: shortCols,
      head: dayHead.filter((h) => h !== '最小|大手数'),
      rows: [
        ['', '0.68', '68', '-981.16', '-8.90 %', '0', '11021.52', '0.00'],
        ['', '22.87', '1436', '3877.20', '54.27 %', '0', '11021.52', '3424.95'],
        ['', '11.83', '935', '1218.40', '20.56 %', '0', '7144.32', '700.27'],
        ['', '11.02', '903', '3321.94', '127.57 %', '-7000', '5925.92', '2112.02'],
        ['', '3.04', '304', '393.44', '4.27 %', '0', '9603.98', '848.5'],
        ['', '2.05', '205', '1235.22', '15.49 %', '0', '9210.54', '1344.66'],
        ['', '4.54', '454', '1165.45', '17.11 %', '0', '7975.32', '1030.58'],
        ['', '0.00', '0', '0.00', '0.00 %', '-5675', '6809.87', '0'],
        ['', '4.92', '492', '3302.35', '35.96 %', '0', '12484.87', '3935.29'],
        ['', '6.66', '666', '345.84', '3.91 %', '0', '9182.52', '2254.85'],
        ['', '1.40', '140', '62.33', '0.71 %', '0', '8836.68', '893.02'],
        ['', '1.82', '182', '86.06', '0.99 %', '0', '8774.35', '1123.37'],
        ['', '0.00', '0', '0.00', '0.00 %', '8688', '8688.29', '360.54'],
      ],
      total: ['合计', '70.83', '', '14027.07', '271.95 %', '-3987', '', '3935.29'],
    },
  },
  {
    className: 'top-[350px] left-[477px] w-[618px] bottom-0',
    title: '2126957: ECMarkets-Live02 - EC Markets Limited - [XAUUSD,M5]',
    symbol: 'XAUUSD,M5',
    active: true,
    frame: 'M5',
    cursor: true,
    candles: [
      { x: 0, high: 181, low: 268, top: 225, bottom: 239 },
      { x: 20, high: 223, low: 255 },
      { x: 32, high: 240, low: 371 },
    ],
    priceLine: 113,
    marker: 'left-[445px]',
    prices: [
      '2986.35',
      '2984.85',
      '2983.35',
      '',
      '2980.35',
      '2978.85',
      '2977.35',
      '2975.85',
      '2974.40',
      '2972.90',
      '2971.40',
      '2969.90',
    ],
    priceClass: 'mt-2.5 h-[374px]',
    current: 'top-[109px]',
    times: [
      '7 Apr 2025',
      '7 Apr 23:05',
      '7 Apr 23:15',
      '7 Apr 23:25',
      '7 Apr 23:35',
      '7 Apr 23:45',
      '7 Apr 23:55',
    ],
    status: ['余额: 75.98 USD', '盈/亏: 0.00', '净值: 75.98', '可用预付款: 75.98'],
    stats: {
      className: 'top-px left-[21px] right-[-2px]',
      tab: '日',
      line: '12,101 205,78 403,56 542,19',
      axisEnd: 900,
      dates: [{ x: 186, text: '2025.04.01' }],
      cols: dayCols,
      head: dayHead,
      rows: [
        ['2025.04.07', '0.94', '0.01 | 0.01', '94', '-10.75', '-12.39 %', '0', '75.98', '-3.13'],
        ['2025.04.04', '1.09', '0.01 | 0.01', '109', '-8.08', '-8.52 %', '0', '86.73', '-2.47'],
        ['2025.04.03', '1.43', '0.01 | 0.01', '143', '26.27', '38.33 %', '0', '94.81', '-3.8'],
        ['2025.04.02', '1.00', '0.01 | 0.01', '100', '9.43', '15.95 %', '0', '68.54', '-2.34'],
        ['2025.04.01', '0.32', '0.01 | 0.01', '32', '9.11', '18.22 %', '50', '59.11', '-2.35'],
      ],
      total: ['合计', '4.78', '', '478', '25.98', '51.96 %', '50', '', '-3.8'],
    },
  },
];

export default function App() {
  return (
    <main className="relative h-screen overflow-hidden bg-[#f0f0f0]">
      {terminals.map((t, i) => (
        <Terminal key={i} {...t} />
      ))}
    </main>
  );
}
